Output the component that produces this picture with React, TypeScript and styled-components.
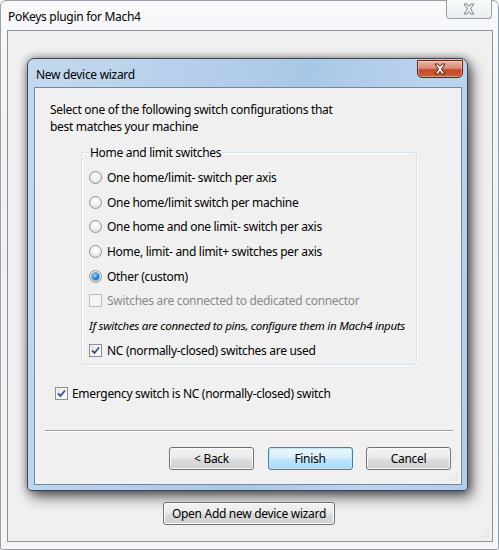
import styled, { createGlobalStyle } from "styled-components";

const GlobalStyle = createGlobalStyle`
  html, body { margin: 0; padding: 0; background: #ffffff; }
  body {
    font-family: "Noto Sans", "Open Sans", sans-serif;
    font-size: 12px;
    letter-spacing: -0.3px;
    color: #000;
  }
  * { box-sizing: border-box; }
`;

const OuterWindow = styled.div`
  width: 499px;
  height: 550px;
  border: 1px solid #9aa0a8;
  border-radius: 6px 6px 2px 2px;
  background: linear-gradient(180deg, #f7f9fb 0%, #eef2f6 40%, #f3f5f8 100%);
  padding: 0 5px 7px 6px;
  display: flex;
  flex-direction: column;
`;

const OuterTitleBar = styled.div`
  height: 29px;
  display: flex;
  align-items: flex-start;
  justify-content: space-between;
`;

const OuterTitle = styled.span`
  margin: 8px 0 0 1px;
  line-height: 15px;
  color: #000;
`;

const OuterClose = styled.div`
  width: 46px;
  height: 19px;
  margin-top: -1px;
  margin-right: 1px;
  border: 1px solid #9a9ea5;
  border-top: none;
  border-radius: 0 0 4px 4px;
  background: linear-gradient(180deg, #fbfcfd 0%, #f2f4f7 50%, #e9edf2 100%);
  display: flex;
  align-items: center;
  justify-content: center;
`;

const OuterClient = styled.div`
  flex: 1;
  border: 1px solid #8e939a;
  background: #f0f0f0;
  padding: 27px 0 0 19px;
  display: flex;
  flex-direction: column;
  align-items: flex-start;
`;

const Dialog = styled.div`
  width: 441px;
  height: 433px;
  border: 1px solid #3b4654;
  border-radius: 7px 7px 4px 4px;
  background: linear-gradient(100deg, #c4d9ef 0%, #b7d0eb 30%, #a9c7e6 55%, #bcd4ee 80%, #b2cdea 100%);
  box-shadow: 4px 6px 14px rgba(0, 0, 0, 0.6), 0 0 9px rgba(0, 0, 0, 0.4);
  padding: 0 5px 5px 6px;
  display: flex;
  flex-direction: column;
`;

const DialogTitleBar = styled.div`
  height: 28px;
  display: flex;
  align-items: flex-start;
  justify-content: space-between;
`;

const DialogTitle = styled.span`
  margin: 8px 0 0 2px;
  line-height: 15px;
`;

const RedClose = styled.div`
  width: 46px;
  height: 18px;
  margin-top: 1px;
  margin-right: -1px;
  border: 1px solid #6b2114;
  border-radius: 0 0 5px 5px;
  background: linear-gradient(180deg, #eab3a5 0%, #dc8a75 45%, #c7482c 55%, #d05c3c 100%);
  box-shadow: inset 0 0 0 1px rgba(255, 255, 255, 0.35);
  display: flex;
  align-items: center;
  justify-content: center;
`;

const DialogClient = styled.div`
  flex: 1;
  border: 1px solid #6f8aa8;
  background: #f0f0f0;
  display: flex;
  flex-direction: column;
  position: relative;
`;

const Intro = styled.p`
  margin: 14px 0 0 15px;
  line-height: 16.5px;
`;

const GroupBox = styled.fieldset`
  margin: 9.5px 0 0 46px;
  width: 336px;
  border: 1px solid #d5dfe5;
  border-radius: 3px;
  box-shadow: inset 1px 1px 0 #ffffff, 1px 1px 0 #ffffff;
  padding: 5.5px 4px 1.5px 7px;
`;

const Legend = styled.legend`
  padding: 0 1px;
  line-height: 15px;
`;

const OptionRow = styled.label<{ $disabled?: boolean }>`
  height: 24.7px;
  display: flex;
  align-items: center;
  gap: 5px;
  color: ${(p) => (p.$disabled ? "#8a8a8a" : "#000")};
  white-space: nowrap;
`;

const Note = styled.div`
  height: 24.7px;
  display: flex;
  align-items: center;
  font-style: italic;
  font-size: 11.5px;
  letter-spacing: -0.27px;
  white-space: nowrap;
`;

const Radio = styled.span<{ $checked?: boolean }>`
  width: 13px;
  height: 13px;
  border-radius: 50%;
  border: 1px solid #8f9399;
  background: radial-gradient(circle at 50% 35%, #ffffff 0%, #f2f2f2 45%, #d6d6d6 100%);
  display: flex;
  align-items: center;
  justify-content: center;
  flex-shrink: 0;

  &::after {
    content: "";
    width: 7px;
    height: 7px;
    border-radius: 50%;
    display: ${(p) => (p.$checked ? "block" : "none")};
    background: radial-gradient(circle at 40% 35%, #a6dbff 0%, #2f8ad8 45%, #0d3e77 100%);
    box-shadow: 0 0 0 1px #7aa7d1;
  }
`;

const Check = styled.span<{ $disabled?: boolean }>`
  width: 13px;
  height: 13px;
  border: 1px solid ${(p) => (p.$disabled ? "#bcbcbc" : "#8f8f8f")};
  background: ${(p) =>
    p.$disabled
      ? "#f4f4f4"
      : "linear-gradient(135deg, #dcdcdc 0%, #f4f4f4 55%, #ffffff 100%)"};
  box-shadow: inset 0 0 0 1px ${(p) => (p.$disabled ? "#f4f4f4" : "#f5f5f5")};
  display: flex;
  align-items: center;
  justify-content: center;
  flex-shrink: 0;
`;

const EmergencyRow = styled(OptionRow)`
  margin: 16px 0 0 20px;
  height: 25px;
  gap: 4px;
`;

const Separator = styled.hr`
  margin: 24px 8px 0 10px;
  border: none;
  border-top: 1px solid #a0a0a0;
  border-bottom: 1px solid #ffffff;
  height: 0;
`;

const ButtonRow = styled.div`
  display: flex;
  justify-content: flex-end;
  gap: 13.5px;
  margin: 15px 10px 0 0;
`;

const Button = styled.button<{ $default?: boolean; $w?: number }>`
  width: ${(p) => p.$w ?? 85}px;
  height: 23px;
  font: inherit;
  letter-spacing: inherit;
  color: #000;
  border-radius: 3px;
  border: 1px solid ${(p) => (p.$default ? "#3c7fb1" : "#707070")};
  background: ${(p) =>
    p.$default
      ? "linear-gradient(180deg, #eaf6fd 0%, #d9f0fc 48%, #bee6fd 52%, #a7d9f5 100%)"
      : "linear-gradient(180deg, #f2f2f2 0%, #ebebeb 48%, #dddddd 52%, #cfcfcf 100%)"};
  box-shadow: inset 0 0 0 1px ${(p) => (p.$default ? "#c6e6f8" : "#fbfbfb")};
  padding: 0;
`;

const OpenButton = styled(Button)`
  margin: 11px 0 0 136px;
`;

const Grip = styled.svg`
  position: absolute;
  right: 2px;
  bottom: 2px;
`;

const OuterGripWrap = styled.div`
  position: relative;
  align-self: stretch;
  flex: 1;
`;

function GripDots() {
  const dots = [
    [8, 2],
    [8, 5],
    [8, 8],
    [5, 5],
    [5, 8],
    [2, 8],
  ];
  return (
    <Grip width="10" height="10" viewBox="0 0 10 10">
      {dots.map(([x, y]) => (
        <g key={`${x}-${y}`}>
          <rect x={x + 0.5} y={y + 0.5} width="1" height="1" fill="#ffffff" />
          <rect x={x - 0.5} y={y - 0.5} width="1" height="1" fill="#b0b0b0" />
        </g>
      ))}
    </Grip>
  );
}

function CheckMark() {
  return (
    <svg width="9" height="9" viewBox="0 0 9 9">
      <path d="M1 4.5 L3.5 7 L8 1.5" fill="none" stroke="#3a4f8a" strokeWidth="1.8" />
    </svg>
  );
}

const radios = [
  "One home/limit- switch per axis",
  "One home/limit switch per machine",
  "One home and one limit- switch per axis",
  "Home, limit- and limit+ switches per axis",
  "Other (custom)",
];

export default function App() {
  return (
    <>
      <GlobalStyle />
      <OuterWindow>
        <OuterTitleBar>
          <OuterTitle>PoKeys plugin for Mach4</OuterTitle>
          <OuterClose>
            <svg width="14" height="12" viewBox="0 0 14 12">
              <path
                d="M2 1 L5 1 L7 3.5 L9 1 L12 1 L8.5 6 L12 11 L9 11 L7 8.5 L5 11 L2 11 L5.5 6 Z"
                fill="#f6f7f8"
                stroke="#7c8087"
                strokeWidth="1"
              />
            </svg>
          </OuterClose>
        </OuterTitleBar>
        <OuterClient>
          <Dialog>
            <DialogTitleBar>
              <DialogTitle>New device wizard</DialogTitle>
              <RedClose>
                <svg width="14" height="12" viewBox="0 0 14 12">
                  <path
                    d="M2 1 L5 1 L7 3.5 L9 1 L12 1 L8.5 6 L12 11 L9 11 L7 8.5 L5 11 L2 11 L5.5 6 Z"
                    fill="#ffffff"
                    stroke="#5a1a0e"
                    strokeWidth="1"
                  />
                </svg>
              </RedClose>
            </DialogTitleBar>
            <DialogClient>
              <Intro>
                Select one of the following switch configurations that
                <br />
                best matches your machine
              </Intro>
              <GroupBox>
                <Legend>Home and limit switches</Legend>
                {radios.map((r, i) => (
                  <OptionRow key={r}>
                    <Radio $checked={i === 4} />
                    {r}
                  </OptionRow>
                ))}
                <OptionRow $disabled>
                  <Check $disabled />
                  Switches are connected to dedicated connector
                </OptionRow>
                <Note>If switches are connected to pins, configure them in Mach4 inputs</Note>
                <OptionRow>
                  <Check>
                    <CheckMark />
                  </Check>
                  NC (normally-closed) switches are used
                </OptionRow>
              </GroupBox>
              <EmergencyRow>
                <Check>
                  <CheckMark />
                </Check>
                Emergency switch is NC (normally-closed) switch
              </EmergencyRow>
              <Separator />
              <ButtonRow>
                <Button>&lt; Back</Button>
                <Button $default>Finish</Button>
                <Button>Cancel</Button>
              </ButtonRow>
              <GripDots />
            </DialogClient>
          </Dialog>
          <OpenButton $w={172}>Open Add new device wizard</OpenButton>
          <OuterGripWrap>
            <GripDots />
          </OuterGripWrap>
        </OuterClient>
      </OuterWindow>
    </>
  );
}
